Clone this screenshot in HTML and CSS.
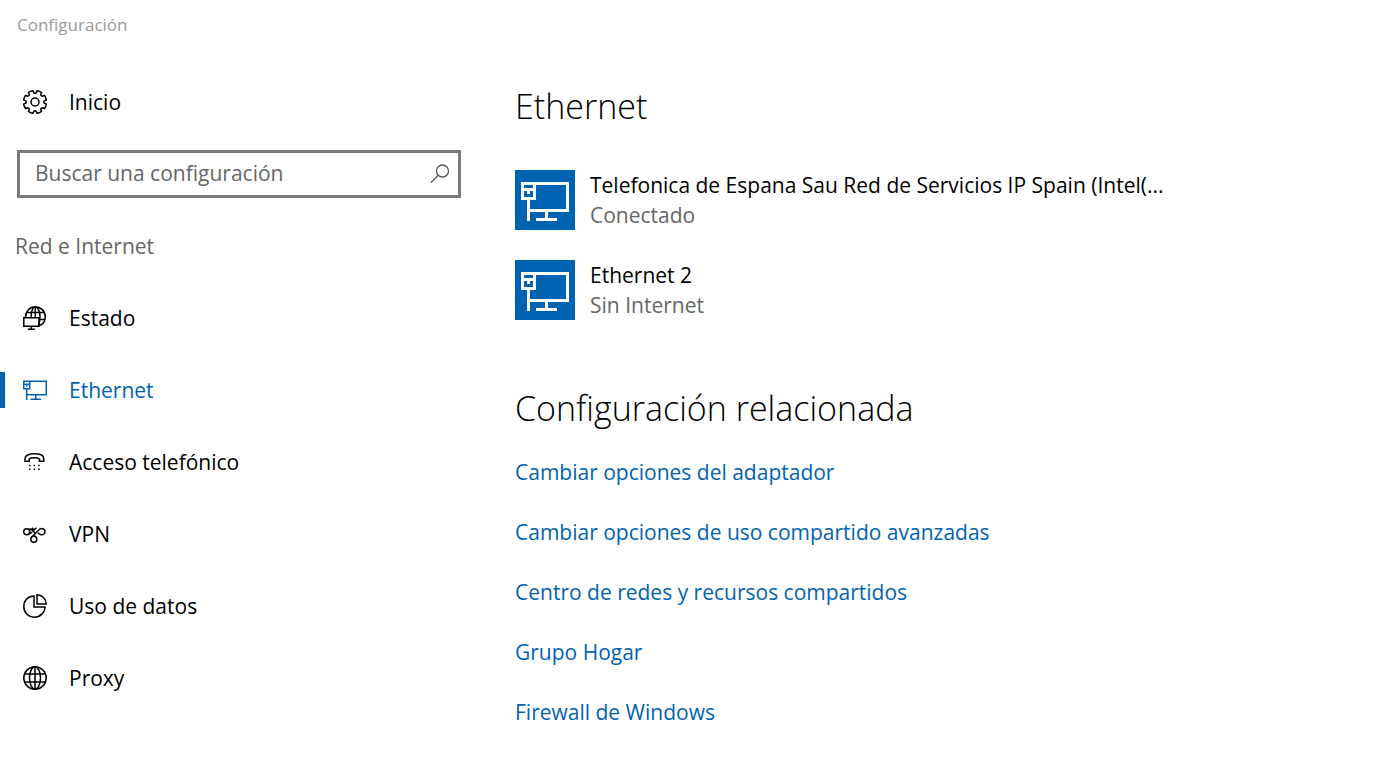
FILE: index.html
```html
<!DOCTYPE html>
<html lang="es">
<head>
<meta charset="utf-8">
<title>Configuración</title>
<link rel="stylesheet" href="styles.css">
</head>
<body>
<header class="titlebar">Configuración</header>
<div class="layout">
  <aside class="sidebar">
    <a class="nav-item" href="#">
      <svg class="icon" viewBox="0 0 24 24"><g transform="translate(12 12)"><path d="M1.1-9.200 2.1-11.3Q4.6-11 6.5-9.5L5.7-7.3Q6.1-6.1 7.3-5.7L9.5-6.5Q11-4.6 11.3-2.1L9.2-1.1Q8.4 0 9.2 1.1L11.3 2.1Q11 4.6 9.5 6.5L7.3 5.7Q6.1 6.1 5.7 7.3L6.5 9.5Q4.6 11 2.1 11.3L1.1 9.2Q0 8.4-1.1 9.2L-2.1 11.3Q-4.6 11-6.5 9.5L-5.7 7.3Q-6.1 6.1-7.3 5.7L-9.5 6.5Q-11 4.6-11.3 2.1L-9.2 1.1Q-8.4 0-9.2-1.1L-11.3-2.1Q-11-4.6-9.5-6.5L-7.3-5.7Q-6.1-6.1-5.7-7.3L-6.5-9.5Q-4.6-11-2.1-11.3L-1.1-9.200Q0-8.4 1.1-9.200Z"/><circle r="4"/></g></svg>
      <span>Inicio</span>
    </a>
    <form class="search">
      <input class="search-input" type="text" aria-label="Buscar una configuración" placeholder="Buscar una configuración">
      <button class="search-button" type="button" aria-label="Buscar">
        <svg class="search-icon" viewBox="0 0 20 20"><circle cx="12.5" cy="7" r="6"/><path d="M8.2 11.2 1 18.5"/></svg>
      </button>
    </form>
    <h2 class="section-label">Red e Internet</h2>
    <nav class="nav">
      <a class="nav-item" href="#">
        <svg class="icon" viewBox="0 0 24 24"><path d="M2.500 11.500C2.500 5 7 .8 12.300 .8S22.300 5 22.300 10.500 19.500 18.700 16 19.800M8 11.500C8 5 10 .8 12.300 .8S17 5 17 10.500c0 4-.8 7-1.500 9M12.300 .8v10.500M4 6.500h17M16 13.500h5.500"/><path d="M.8 11.800h15.200v8.500H.8zM8.300 20.300v3M4.800 23.200h7"/></svg>
        <span>Estado</span>
      </a>
      <a class="nav-item active" href="#" aria-current="page">
        <svg class="icon icon-solid" viewBox="6 7 48 48"><path fill-rule="evenodd" d="M6 12H54V42H33V48H42V51H21V48H30V42H15V51H12V30H6zM21 15V30H15V39H51V15zM9 15V18H18V15zM9 21V27H18V21H15V24H12V21z"/></svg>
        <span>Ethernet</span>
      </a>
      <a class="nav-item" href="#">
        <svg class="icon" viewBox="0 0 24 24"><path d="M2 11.300V8.500C2 5.500 6 3.800 11.300 3.800s9.400 1.700 9.400 4.700v2.800h-4.200V9Q15 7.800 11.300 7.800T6.200 9v2.300z"/><path class="dots" d="M6 14.800h1.500v1.500H6zm4.600 0h1.500v1.500h-1.500zm4.600 0h1.500v1.500h-1.500zM6 18.600h1.500v1.500H6zm4.600 0h1.500v1.500h-1.500zm4.600 0h1.500v1.500h-1.500z"/></svg>
        <span>Acceso telefónico</span>
      </a>
      <a class="nav-item" href="#">
        <svg class="icon" viewBox="0 0 24 24"><circle cx="3.700" cy="9.700" r="3"/><circle cx="10.800" cy="17.200" r="3"/><path d="M5.800 7.600Q7.300 6.500 9 8L11.800 10.700M6 12 9.300 10.200M8.800 5.900l2.300 2 2.300-2M8.800 15 15.500 8.200C18 5.500 22 6.500 22 9.700c0 3-3.500 4-5.800 2.200L14.800 10.600M12.800 15.200 10.800 13.200"/></svg>
        <span>VPN</span>
      </a>
      <a class="nav-item" href="#">
        <svg class="icon" viewBox="0 0 24 24"><path d="M11 2C5 2 .8 6.500 .8 12.500s4.500 10.700 10.500 10.700S22 18.500 22 13H11zM14 .8V10h9.200C23.200 5 19 .8 14 .8z"/></svg>
        <span>Uso de datos</span>
      </a>
      <a class="nav-item" href="#">
        <svg class="icon" viewBox="0 0 24 24"><circle cx="12" cy="12" r="11.200"/><ellipse cx="12" cy="12" rx="5.500" ry="11.200"/><path d="M12 1v22M2 8h20M2 16h20"/></svg>
        <span>Proxy</span>
      </a>
    </nav>
  </aside>
  <main class="content">
    <h1 class="heading">Ethernet</h1>
    <ul class="networks">
      <li class="network">
        <svg class="tile" viewBox="0 0 60 60"><path fill-rule="evenodd" d="M6 12H54V42H33V48H42V51H21V48H30V42H15V51H12V30H6zM21 15V30H15V39H51V15zM9 15V18H18V15zM9 21V27H18V21H15V24H12V21z"/></svg>
        <div class="network-text"><div class="network-name">Telefonica de Espana Sau Red de Servicios IP Spain (Intel(...</div><div class="network-status">Conectado</div></div>
      </li>
      <li class="network">
        <svg class="tile" viewBox="0 0 60 60"><path fill-rule="evenodd" d="M6 12H54V42H33V48H42V51H21V48H30V42H15V51H12V30H6zM21 15V30H15V39H51V15zM9 15V18H18V15zM9 21V27H18V21H15V24H12V21z"/></svg>
        <div class="network-text"><div class="network-name">Ethernet 2</div><div class="network-status">Sin Internet</div></div>
      </li>
    </ul>
    <h2 class="heading">Configuración relacionada</h2>
    <div class="links">
      <a href="#">Cambiar opciones del adaptador</a>
      <a href="#">Cambiar opciones de uso compartido avanzadas</a>
      <a href="#">Centro de redes y recursos compartidos</a>
      <a href="#">Grupo Hogar</a>
      <a href="#">Firewall de Windows</a>
    </div>
  </main>
</div>
</body>
</html>
```
FILE: styles.css
```css
* { box-sizing: border-box; }
body {
  margin: 0;
  background: #fff;
  color: #000;
  font: 21px/30px "Open Sans", "Noto Sans", sans-serif;
}
a { color: #0063b1; text-decoration: none; }
.titlebar { padding: 10px 17px 0; font-size: 17px; line-height: 30px; color: #999; }
.layout {
  display: grid;
  grid-template-columns: minmax(0, 461fr) minmax(0, 880fr);
  column-gap: 54px;
  padding-top: 26px;
}
.nav-item {
  display: flex;
  align-items: center;
  gap: 22px;
  height: 72px;
  padding-left: 23px;
  color: #000;
}
.active {
  color: #0063b1;
  background: linear-gradient(#0063b1, #0063b1) left center / 5px 36px no-repeat;
}
.icon { width: 24px; height: 24px; fill: none; stroke: currentColor; stroke-width: 1.5; }
.icon-solid { fill: currentColor; stroke: none; }
.dots { fill: currentColor; stroke: none; }
.search {
  display: flex;
  align-items: center;
  height: 48px;
  margin: 12px 0 0 17px;
  border: 3px solid #7a7a7a;
}
.search-input {
  flex: 1;
  min-width: 0;
  height: 100%;
  padding: 0 0 2px 15px;
  border: 0;
  outline: 0;
  background: none;
  color: #000;
  font: inherit;
}
.search-input::placeholder { color: #666; opacity: 1; }
.search-button { display: flex; padding: 0 8px; border: 0; background: none; }
.search-icon { width: 20px; height: 20px; fill: none; stroke: #555; stroke-width: 1.3; }
.section-label { margin: 33px 0 21px 15px; font: inherit; color: #666; }
.heading { margin: 0; font-size: 34px; line-height: 48px; font-weight: 300; }
.content { padding-top: 16px; }
.networks {
  display: flex;
  flex-direction: column;
  gap: 30px;
  margin: 40px 0 64px;
  padding: 0;
  list-style: none;
}
.network { display: flex; gap: 15px; }
.tile { flex: none; width: 60px; height: 60px; background: #0063b1; fill: #fff; }
.network-text { min-width: 0; }
.network-status { color: #666; }
.links {
  display: flex;
  flex-direction: column;
  align-items: flex-start;
  gap: 30px;
  margin-top: 25px;
}
```
